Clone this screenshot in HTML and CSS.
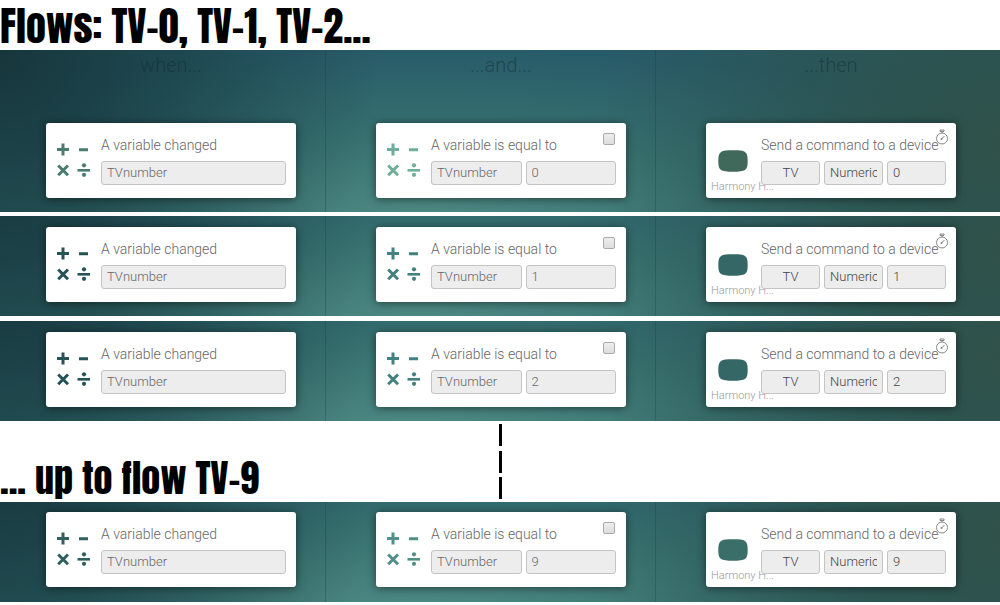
FILE: index.html
```
<!DOCTYPE html>
<html lang="en">
<head>
<meta charset="utf-8">
<meta name="viewport" content="width=device-width, initial-scale=1">
<title>Flows</title>
<link rel="stylesheet" href="styles.css">
</head>
<body>
<svg class="sprite" aria-hidden="true">
  <symbol id="math" viewBox="0 0 36 36">
    <g fill="none" stroke="currentColor" stroke-width="3">
      <path d="M1 8.500H13M7 2.500V14.500M23 8.800H32"/>
      <path d="M2.200 24.500L12 34.300M12 24.500L2.200 34.300" stroke-width="3"/>
      <path d="M21.500 29.300H34" stroke-width="2.600"/>
    </g>
    <circle cx="28" cy="24.300" r="2.100" fill="currentColor"/>
    <circle cx="28" cy="33.800" r="2.100" fill="currentColor"/>
  </symbol>
  <symbol id="hub" viewBox="0 0 30 22">
    <path d="M15 .3C21 .3 25 .6 27 2C29.300 3.600 29.700 7 29.700 11S29.300 18.400 27 20C25 21.400 21 21.700 15 21.700S5 21.400 3 20C.7 18.400 .3 15 .3 11S.7 3.600 3 2C5 .6 9 .3 15 .3Z" fill="currentColor"/>
  </symbol>
  <symbol id="timer" viewBox="0 0 14 16">
    <g fill="none" stroke="currentColor">
      <circle cx="7" cy="9.500" r="5.500"/>
      <path d="M5 1H9V2.500H5ZM7 2.500V4M6.500 10L9.500 7"/>
    </g>
    <circle cx="6.500" cy="10" r="1" fill="currentColor"/>
  </symbol>
</svg>

<h1 class="heading">Flows: TV-0, TV-1, TV-2...</h1>

<section class="flow flow-first">
  <div class="column">
    <h2 class="step">when...</h2>
    <article class="card tone-moss">
      <svg class="math"><use href="#math"/></svg>
      <label class="title" for="w0">A variable changed</label>
      <div class="fields"><input class="field" id="w0" value="TVnumber"></div>
    </article>
  </div>
  <div class="column">
    <h2 class="step">...and...</h2>
    <article class="card tone-mint">
      <svg class="math"><use href="#math"/></svg>
      <label class="title" for="a0">A variable is equal to</label>
      <div class="fields"><input class="field" id="a0" value="TVnumber"><input class="field" aria-label="Value" value="0"></div>
      <input class="tick" type="checkbox" aria-label="Invert">
    </article>
  </div>
  <div class="column">
    <h2 class="step">...then</h2>
    <article class="card tone-olive">
      <svg class="hub"><use href="#hub"/></svg>
      <span class="device">Harmony H...</span>
      <label class="title" for="t0">Send a command to a device</label>
      <div class="fields strong"><input class="field center" id="t0" value="TV"><input class="field" aria-label="Command" value="Numeric"><input class="field" aria-label="Key" value="0"></div>
      <button class="timer" type="button" aria-label="Delay"><svg><use href="#timer"/></svg></button>
    </article>
  </div>
</section>

<section class="flow">
  <div class="column">
    <article class="card tone-deep">
      <svg class="math"><use href="#math"/></svg>
      <label class="title" for="w1">A variable changed</label>
      <div class="fields"><input class="field" id="w1" value="TVnumber"></div>
    </article>
  </div>
  <div class="column">
    <article class="card tone-teal">
      <svg class="math"><use href="#math"/></svg>
      <label class="title" for="a1">A variable is equal to</label>
      <div class="fields"><input class="field" id="a1" value="TVnumber"><input class="field" aria-label="Value" value="1"></div>
      <input class="tick" type="checkbox" aria-label="Invert">
    </article>
  </div>
  <div class="column">
    <article class="card tone-sea">
      <svg class="hub"><use href="#hub"/></svg>
      <span class="device">Harmony H...</span>
      <label class="title" for="t1">Send a command to a device</label>
      <div class="fields strong"><input class="field center" id="t1" value="TV"><input class="field" aria-label="Command" value="Numeric"><input class="field" aria-label="Key" value="1"></div>
      <button class="timer" type="button" aria-label="Delay"><svg><use href="#timer"/></svg></button>
    </article>
  </div>
</section>

<section class="flow">
  <div class="column">
    <article class="card tone-deep">
      <svg class="math"><use href="#math"/></svg>
      <label class="title" for="w2">A variable changed</label>
      <div class="fields"><input class="field" id="w2" value="TVnumber"></div>
    </article>
  </div>
  <div class="column">
    <article class="card tone-teal">
      <svg class="math"><use href="#math"/></svg>
      <label class="title" for="a2">A variable is equal to</label>
      <div class="fields"><input class="field" id="a2" value="TVnumber"><input class="field" aria-label="Value" value="2"></div>
      <input class="tick" type="checkbox" aria-label="Invert">
    </article>
  </div>
  <div class="column">
    <article class="card tone-sea">
      <svg class="hub"><use href="#hub"/></svg>
      <span class="device">Harmony H...</span>
      <label class="title" for="t2">Send a command to a device</label>
      <div class="fields strong"><input class="field center" id="t2" value="TV"><input class="field" aria-label="Command" value="Numeric"><input class="field" aria-label="Key" value="2"></div>
      <button class="timer" type="button" aria-label="Delay"><svg><use href="#timer"/></svg></button>
    </article>
  </div>
</section>

<div class="between">
  <h1 class="heading heading-small">... up to flow TV-9</h1>
  <div class="dashes"><i></i><i></i><i></i></div>
</div>

<section class="flow flow-last">
  <div class="column">
    <article class="card tone-pine">
      <svg class="math"><use href="#math"/></svg>
      <label class="title" for="w9">A variable changed</label>
      <div class="fields"><input class="field" id="w9" value="TVnumber"></div>
    </article>
  </div>
  <div class="column">
    <article class="card tone-jade">
      <svg class="math"><use href="#math"/></svg>
      <label class="title" for="a9">A variable is equal to</label>
      <div class="fields"><input class="field" id="a9" value="TVnumber"><input class="field" aria-label="Value" value="9"></div>
      <input class="tick" type="checkbox" aria-label="Invert">
    </article>
  </div>
  <div class="column">
    <article class="card tone-fern">
      <svg class="hub"><use href="#hub"/></svg>
      <span class="device">Harmony H...</span>
      <label class="title" for="t9">Send a command to a device</label>
      <div class="fields strong"><input class="field center" id="t9" value="TV"><input class="field" aria-label="Command" value="Numeric"><input class="field" aria-label="Key" value="9"></div>
      <button class="timer" type="button" aria-label="Delay"><svg><use href="#timer"/></svg></button>
    </article>
  </div>
</section>
</body>
</html>
```
FILE: styles.css
```
* { box-sizing: border-box; }

body {
  margin: 0;
  background: #fff;
  color: #666;
  font-family: Roboto, "Liberation Sans", sans-serif;
  font-weight: 300;
}

.sprite { position: absolute; width: 0; height: 0; }

.heading {
  position: relative;
  z-index: 1;
  margin: 0;
  padding-top: 2px;
  color: #000;
  font: 400 40px/48px Impact, Anton, "Liberation Sans Narrow", "Liberation Sans", sans-serif;
  white-space: nowrap;
}

.heading-small { font-size: 38px; }

.flow {
  display: grid;
  grid-template-columns: 326fr 330fr 344fr;
  margin-bottom: 4px;
  background:
    radial-gradient(ellipse 380px 400px at 0 0, #17363c, rgba(25, 62, 68, 0.75) 40%, rgba(36, 86, 92, 0) 100%),
    radial-gradient(ellipse 400px 340px at 100% 60%, #2f5149, rgba(44, 82, 78, 0.85) 35%, rgba(44, 88, 94, 0) 100%),
    radial-gradient(ellipse 720px 190px at 42% 110%, #508b85, #36706f 50%, #285b69 95%);
  background-size: 100% 162px;
  background-position: bottom;
}

.flow + .flow { margin-bottom: 5px; }

.column {
  padding: 11px 0 14px 50px;
  border-right: 1px solid rgba(10, 50, 60, 0.25);
}

.column:first-child { padding-left: 46px; }
.column:last-child { border-right: 0; }

.flow-first .column { padding-top: 0; }
.flow-last .column { padding-top: 10px; padding-bottom: 15px; }

.step {
  width: 250px;
  margin: 0 0 43px;
  color: rgba(15, 45, 52, 0.5);
  font-size: 20px;
  font-weight: 300;
  line-height: 30px;
  text-align: center;
}

.card {
  position: relative;
  width: 250px;
  min-height: 75px;
  padding: 12px 10px 12px 55px;
  border-radius: 3px;
  background: #fff;
  box-shadow: 0 1px 8px rgba(0, 0, 0, 0.5);
}

.title {
  display: block;
  margin-bottom: 6px;
  font-size: 14px;
  line-height: 20px;
  white-space: nowrap;
}

.fields {
  position: relative;
  display: flex;
  gap: 4px;
}

.field {
  flex: 1 1 0;
  min-width: 0;
  height: 24px;
  padding: 0 5px 2px;
  border: 1px solid #c4c4c4;
  border-radius: 3px;
  background: #ededed;
  color: #666;
  font: inherit;
  font-size: 13px;
}

.strong .field { color: #444; }
.center { text-align: center; }

.math, .hub, .device, .tick, .timer { position: absolute; }

.math { top: 18px; left: 10px; width: 36px; height: 36px; }
.hub { top: 27px; left: 12px; width: 30px; height: 22px; }

.device {
  top: 57px;
  left: 5px;
  color: #999;
  font-size: 11px;
  line-height: 14px;
}

.tick {
  top: 10px;
  right: 11px;
  width: 12px;
  height: 12px;
  margin: 0;
  border: 1px solid #aaa;
  border-radius: 2px;
  background: linear-gradient(#eee, #dcdcdc);
  appearance: none;
}

.timer {
  top: 6px;
  right: 7px;
  width: 14px;
  height: 16px;
  padding: 0;
  border: 0;
  background: none;
  color: #888;
}

.timer svg { display: block; width: 14px; height: 16px; }

.tone-moss { --tone: #4a7d70; }
.tone-mint { --tone: #6fae98; }
.tone-olive { --tone: #41695b; }
.tone-deep { --tone: #255358; }
.tone-teal { --tone: #438080; }
.tone-sea { --tone: #356766; }
.tone-pine { --tone: #30605f; }
.tone-jade { --tone: #519088; }
.tone-fern { --tone: #3a6e69; }

.math, .hub { color: var(--tone); }

.between {
  display: grid;
  grid-template-columns: 1fr 3px 1fr;
  height: 78px;
  margin-top: -2px;
}

.between .heading { align-self: end; }

.dashes {
  display: flex;
  flex-direction: column;
  justify-content: space-between;
  padding-bottom: 3px;
}

.dashes i { height: 22px; background: #000; }
```
